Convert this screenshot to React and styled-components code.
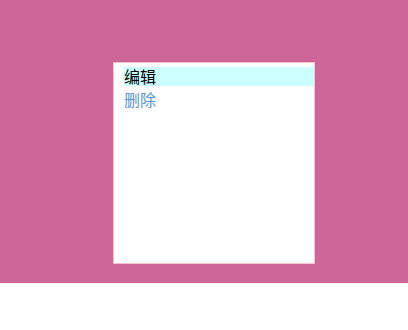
import styled, { createGlobalStyle } from 'styled-components';

const GlobalStyle = createGlobalStyle`
  html, body {
    margin: 0;
    padding: 0;
    background: #fff;
  }
  body {
    font-family: "Noto Sans CJK SC", "Liberation Sans", sans-serif;
  }
`;

const items = [
  { label: '编辑', active: true },
  { label: '删除', active: false },
];

const App = () => {
  return (
    <>
      <GlobalStyle />
      <Stage>
        <Menu>
          <List>
            {items.map((item) => (
              <Item key={item.label} active={item.active}>
                {item.label}
              </Item>
            ))}
          </List>
        </Menu>
      </Stage>
    </>
  );
};

const Stage = styled.div`
  height: 283px;
  background-color: #cc6699;
  padding: 62px 0 0 113px;
  box-sizing: border-box;
`;

const Menu = styled.div`
  width: 200px;
  height: 196px;
  background: #fff;
  border: 1px solid #ffc0cb;
  padding-top: 4px;
`;

const List = styled.ul`
  list-style: none;
  margin: 0;
  padding: 0 0 0 10px;
`;

const Item = styled.li.withConfig({
  shouldForwardProp: (prop) => prop !== 'active',
})`
  height: 19px;
  line-height: 19px;
  margin-bottom: 4px;
  font-size: 16px;
  color: ${(p) => (p.active ? '#000' : '#5b95cf')};
  background: ${(p) => (p.active ? '#ccffff' : 'transparent')};
  cursor: pointer;
`;

export default App;
